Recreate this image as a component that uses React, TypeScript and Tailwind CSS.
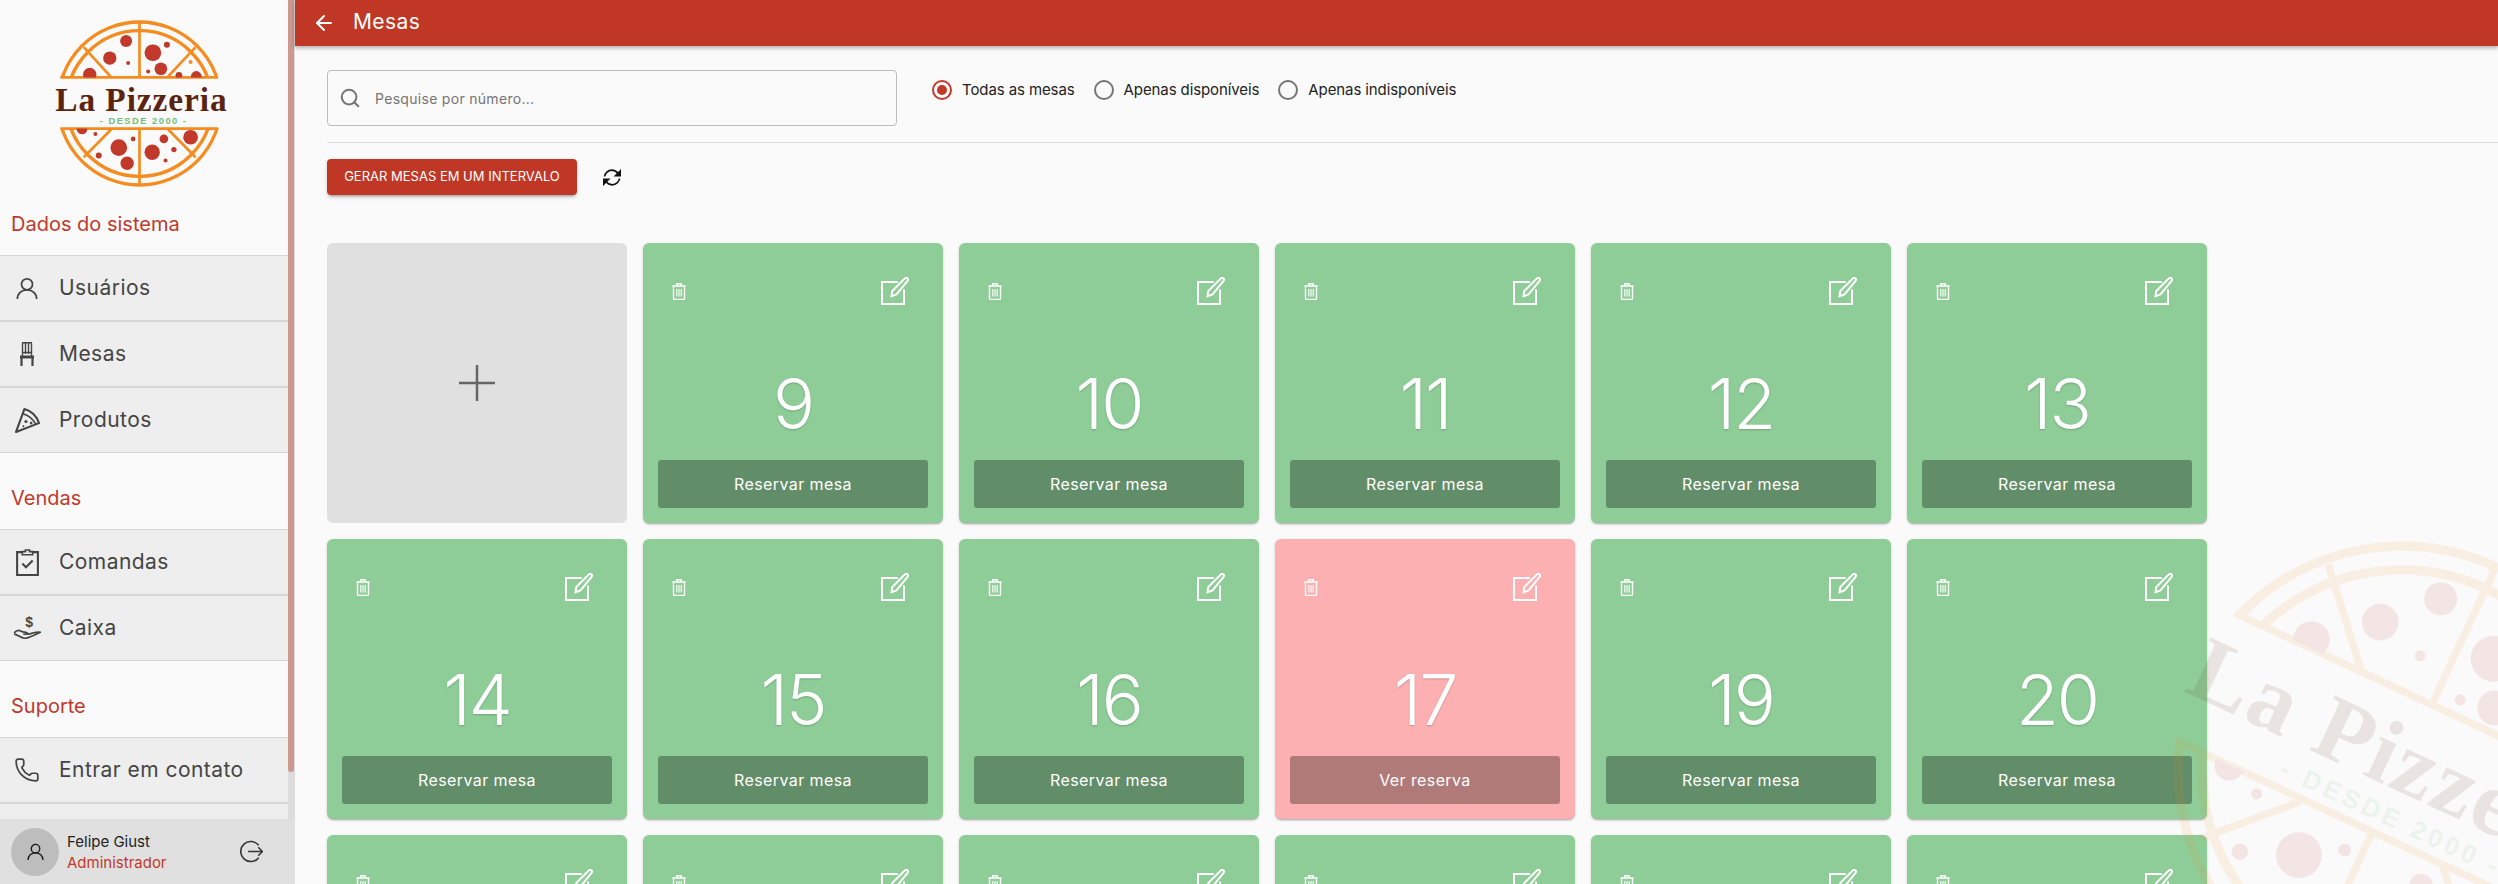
import { ArrowLeft, Phone, Search } from 'lucide-react';

const font = { fontFamily: 'Inter, "Noto Sans", sans-serif' };

function Logo({ className }: { className: string }) {
  const top = [
    [377, 122, 18], [328, 173, 20], [383, 188, 6], [457, 157, 25], [499, 133, 9], [481, 205, 19],
    [443, 213, 6], [268, 222, 20], [535, 225, 10], [587, 228, 16],
  ];
  const bottom = [
    [245, 385, 16], [285, 400, 6], [355, 441, 25], [398, 415, 7], [295, 465, 9], [380, 488, 20],
    [455, 455, 23], [490, 415, 13], [520, 447, 8], [495, 480, 6], [570, 410, 22],
  ];
  return (
    <svg viewBox="137 29 560 560" className={className}>
      <defs>
        <clipPath id="pizza-top"><rect x="137" y="29" width="560" height="202" /></clipPath>
        <clipPath id="pizza-bottom"><rect x="137" y="384" width="560" height="205" /></clipPath>
      </defs>
      {['pizza-top', 'pizza-bottom'].map((clip) => (
        <g key={clip} clipPath={`url(#${clip})`} fill="none" stroke="#f68b1f" strokeWidth="10">
          <circle cx="417" cy="309" r="244" />
          <circle cx="417" cy="309" r="218" />
        </g>
      ))}
      <g stroke="#f68b1f" strokeWidth="8">
        <path d="M180 231H652M180 384H652" />
        <path d="M417 64V231M250 140L330 228M585 140L503 228" />
        <path d="M417 384V554M250 470L332 387M585 470L503 387" />
      </g>
      <g clipPath="url(#pizza-top)" fill="#c0392b">
        {top.map(([cx, cy, r]) => <circle key={`${cx}-${cy}`} cx={cx} cy={cy} r={r} />)}
        <circle cx="570" cy="185" r="6" fill="#f68b1f" />
      </g>
      <g clipPath="url(#pizza-bottom)" fill="#c0392b">
        {bottom.map(([cx, cy, r]) => <circle key={`${cx}-${cy}`} cx={cx} cy={cy} r={r} />)}
      </g>
      <text x="165" y="332" textLength="513" fontSize="100" fontWeight="700" fill="#5a2410" style={{ fontFamily: '"Liberation Serif", serif' }}>La Pizzeria</text>
      <text x="298" y="371" textLength="258" fontSize="28" fontWeight="700" fill="#74bd77" style={{ fontFamily: '"Liberation Sans", sans-serif' }}>- DESDE 2000 -</text>
    </svg>
  );
}

function UserIcon({ className }: { className: string }) {
  return (
    <svg viewBox="0 0 24 24" fill="none" stroke="currentColor" strokeWidth="1.9" className={className}>
      <circle cx="12" cy="8" r="6" />
      <path d="M1.5 24c0-6 4.500-10 10.500-10s10.500 4 10.500 10" />
    </svg>
  );
}

function ChairIcon({ className }: { className: string }) {
  return (
    <svg viewBox="0 0 14 24" fill="none" stroke="currentColor" className={className}>
      <path d="M2 .8h10M2.500 1v13M11.500 1v13M5.500 1v11M8.500 1v11M2.500 10.500h9" strokeWidth="1.400" />
      <path d="M0 15h14" strokeWidth="3" />
      <path d="M1.500 16v8M12.500 16v8" strokeWidth="2.200" />
    </svg>
  );
}

function PizzaIcon({ className }: { className: string }) {
  return (
    <svg viewBox="0 0 24 24" fill="none" stroke="currentColor" strokeWidth="2" strokeLinejoin="round" className={className}>
      <path d="M1 23 9 1C15.500 2.500 21 8 23 14.500Z" />
      <path d="M7.500 5.500C13 7 17.500 11 20 15.500" strokeWidth="1.500" />
      <circle cx="10.500" cy="13" r="1.500" fill="currentColor" stroke="none" />
      <circle cx="15.500" cy="14.500" r="1.300" fill="currentColor" stroke="none" />
      <circle cx="8" cy="17.500" r="1" fill="currentColor" stroke="none" />
    </svg>
  );
}

function ClipboardIcon({ className }: { className: string }) {
  return (
    <svg viewBox="0 0 24 26" fill="none" stroke="currentColor" strokeWidth="2" className={className}>
      <path d="M7 3H2v22h20V3h-5" />
      <path d="M7 5.500V2.500h3V1h4v1.500h3v3Z" strokeWidth="1.600" />
      <path d="m7 14 3.500 3.500L17 11" />
    </svg>
  );
}

function CashIcon({ className }: { className: string }) {
  return (
    <svg viewBox="0 0 26 24" fill="none" stroke="currentColor" strokeWidth="1.600" className={className}>
      <path d="M1 16.500c2-2 4-3 6-1.800s4 1.300 5.500 1.500c1.300.2 1.300 1.600-.2 1.600H9.500" />
      <path d="M1 17.500c3 .8 6 3.500 9.500 4 3.500.4 9-3 15-5.500-3-.5-8 1-12 1.800" />
      <text x="15" y="11.500" textAnchor="middle" fontSize="13" fontWeight="700" fill="currentColor" stroke="none" style={{ fontFamily: '"Liberation Sans", sans-serif' }}>$</text>
    </svg>
  );
}

function LogoutIcon({ className }: { className: string }) {
  return (
    <svg viewBox="0 0 24 24" fill="none" stroke="currentColor" strokeWidth="1.600" className={className}>
      <path d="M19.500 5.500A10.500 10.500 0 1 0 19.500 18.500" />
      <path d="M8.500 12h15M19 7.500l4.500 4.500-4.500 4.500" />
    </svg>
  );
}

function SyncIcon({ className }: { className: string }) {
  return (
    <svg viewBox="0 0 18 19" className={className}>
      <g fill="none" stroke="currentColor" strokeWidth="1.700">
        <path d="M1.500 8.500C2 5 5 2.200 8.800 2.200c2.600 0 4.700 1.200 6 3.200" />
        <path d="M16.500 10.500c-.5 3.500-3.500 6.300-7.300 6.300-2.600 0-4.700-1.200-6-3.200" />
      </g>
      <path d="M18 1v7.500h-7.500ZM0 18v-7.500h7.500Z" fill="currentColor" />
    </svg>
  );
}

function TrashIcon({ className }: { className: string }) {
  return (
    <svg viewBox="0 0 14 17" fill="none" stroke="currentColor" strokeWidth="1.400" className={className}>
      <path d="M.4 3h13.200M4.800 3V.8h4.400V3" />
      <path d="M1.500 3v12.300c0 .7.500 1.200 1.200 1.200h8.600c.7 0 1.200-.5 1.200-1.200V3" />
      <path d="M4.800 6v7.500M7 6v7.500M9.200 6v7.500" strokeWidth="1.100" />
    </svg>
  );
}

function EditIcon({ className }: { className: string }) {
  return (
    <svg viewBox="0 0 28 28" fill="none" stroke="currentColor" strokeWidth="2" className={className}>
      <path d="M17 5H1v22h22V12.500" />
      <path d="M24 1.300c1-.8 2.200-.5 2.700.3s.4 1.700-.3 2.500L15.500 17.500l-5 1.800.8-5.300Z" />
    </svg>
  );
}

function MenuItem({ icon, label }: { icon?: React.ReactNode; label?: string }) {
  return (
    <div className="flex h-[66px] items-center border-y border-[#d6d6d6] bg-[#eeeeee] text-[#444444]">
      <div className="flex w-[59px] shrink-0 justify-center pr-[5px]">{icon}</div>
      <span className="text-[21px] tracking-[0.45px]">{label}</span>
    </div>
  );
}

function SectionTitle({ label }: { label: string }) {
  return <div className="flex h-[76px] items-end pb-[18px] pl-[11px] text-[20px] leading-[26px] text-[#c0392b]">{label}</div>;
}

function Sidebar() {
  return (
    <aside className="relative flex h-full w-[295px] shrink-0 overflow-hidden bg-[#fafafa]">
      <div className="w-[288px] shrink-0">
        <div className="h-[179px] pt-[10px]">
          <Logo className="ml-[46px] block h-[187px] w-[187px]" />
        </div>
        <SectionTitle label="Dados do sistema" />
        <MenuItem icon={<UserIcon className="h-[22px] w-[22px]" />} label="Usuários" />
        <MenuItem icon={<ChairIcon className="h-[24px] w-[14px]" />} label="Mesas" />
        <MenuItem icon={<PizzaIcon className="h-[25px] w-[25px]" />} label="Produtos" />
        <SectionTitle label="Vendas" />
        <MenuItem icon={<ClipboardIcon className="h-[27px] w-[25px]" />} label="Comandas" />
        <MenuItem icon={<CashIcon className="h-[26px] w-[28px]" />} label="Caixa" />
        <SectionTitle label="Suporte" />
        <MenuItem icon={<Phone className="h-[26px] w-[26px]" strokeWidth={1.6} />} label="Entrar em contato" />
        <MenuItem />
      </div>
      <div className="w-[7px] bg-[#dcdcdc]">
        <div className="h-[772px] w-[6px] rounded-b-[3px] bg-[#cc9890]" />
      </div>
      <div className="absolute right-0 bottom-0 left-0 flex h-[65px] items-center bg-[#e0e0e0]">
        <div className="ml-[11px] flex h-[48px] w-[48px] items-center justify-center rounded-full bg-[#bdbdbd] text-[#1c1c1c]">
          <UserIcon className="h-[17px] w-[17px]" />
        </div>
        <div className="ml-[8px] flex-1 text-[15px] leading-[21px]">
          <div className="text-[#222222]">Felipe Giust</div>
          <div className="text-[#c0392b]">Administrador</div>
        </div>
        <LogoutIcon className="mr-[32px] h-[23px] w-[23px] text-[#333333]" />
      </div>
    </aside>
  );
}

function Radio({ label, checked }: { label: string; checked?: boolean }) {
  return (
    <label className="flex items-center gap-[10px]">
      <span className={`flex h-[20px] w-[20px] items-center justify-center rounded-full border-2 ${checked ? 'border-[#c0392b]' : 'border-[#757575]'}`}>
        {checked && <span className="h-[10px] w-[10px] rounded-full bg-[#c0392b]" />}
      </span>
      <span className="text-[15px] tracking-[-0.1px] text-[#222222]">{label}</span>
    </label>
  );
}

function AddCard() {
  return (
    <div className="flex h-[280px] w-[300px] items-center justify-center rounded-[6px] bg-[#e0e0e0]">
      <svg viewBox="0 0 36 36" className="h-[36px] w-[36px] text-[#666666]" fill="none" stroke="currentColor" strokeWidth="2.500">
        <path d="M18 0v36M0 18h36" />
      </svg>
    </div>
  );
}

function TableCard({ number, busy }: { number?: number; busy?: boolean }) {
  return (
    <div className={`flex h-[280px] w-[300px] flex-col rounded-[6px] p-[15px] text-white shadow-[0_2px_2px_-1px_rgba(0,0,0,0.25),0_1px_3px_0_rgba(0,0,0,0.14)] ${busy ? 'bg-[#fdb0b1]' : 'bg-[#8ecd97]'}`}>
      <div className="mt-[18px] flex h-[30px] items-center justify-between pr-[19px] pl-[14px]">
        <TrashIcon className="h-[17px] w-[14px]" />
        <EditIcon className="h-[28px] w-[28px]" />
      </div>
      {number !== undefined && (
        <>
          <div className="flex flex-1 items-center justify-center pt-[41px] text-[70px] font-light tracking-[-2px] [text-shadow:0_1px_2px_rgba(0,0,0,0.2)]">{number}</div>
          <div className={`flex h-[48px] items-center justify-center rounded-[3px] text-[16px] tracking-[0.4px] ${busy ? 'bg-[#af7a78]' : 'bg-[#628d69]'}`}>
            {busy ? 'Ver reserva' : 'Reservar mesa'}
          </div>
        </>
      )}
    </div>
  );
}

export default function App() {
  const tables = [9, 10, 11, 12, 13, 14, 15, 16, 17, 19, 20];
  // the third row is cut by the window above its numbers
  const cutRow = [0, 1, 2, 3, 4, 5];
  return (
    <div className="relative flex h-screen w-full overflow-hidden bg-[#fafafa]" style={font}>
      <Sidebar />
      <main className="flex min-w-0 flex-1 flex-col">
        <header className="z-10 flex h-[46px] shrink-0 items-center bg-[#c03825] pl-[17px] text-white shadow-[0_2px_4px_rgba(0,0,0,0.3)]">
          <ArrowLeft className="h-[24px] w-[24px]" strokeWidth={2} />
          <h1 className="ml-[17px] pb-[2px] text-[21px] tracking-[0.4px]">Mesas</h1>
        </header>
        <div className="pl-[32px]">
          <div className="flex h-[97px] items-start border-b border-[#dddddd] pt-[24px]">
            <div className="flex h-[56px] w-[570px] items-center rounded-[4px] border border-[#bbbbbb] pl-[11px] text-[#757575]">
              <Search className="h-[22px] w-[22px]" strokeWidth={2.2} />
              <span className="ml-[14px] text-[14px] tracking-[0.3px]">Pesquise por número...</span>
            </div>
            <div className="ml-[35px] flex items-center pt-[9px]">
              <Radio label="Todas as mesas" checked />
              <div className="ml-[19px]"><Radio label="Apenas disponíveis" /></div>
              <div className="ml-[19px]"><Radio label="Apenas indisponíveis" /></div>
            </div>
          </div>
          <div className="mt-[16px] flex items-center">
            <button className="h-[36px] w-[250px] rounded-[4px] bg-[#c03825] text-[13px] text-white uppercase shadow-[0_3px_3px_-2px_rgba(0,0,0,0.3),0_2px_4px_rgba(0,0,0,0.15)]">
              Gerar mesas em um intervalo
            </button>
            <SyncIcon className="ml-[26px] h-[19px] w-[18px] text-[#111111]" />
          </div>
          <div className="mt-[48px] flex flex-wrap gap-[16px]">
            <AddCard />
            {tables.map((n) => <TableCard key={n} number={n} busy={n === 17} />)}
            {cutRow.map((n) => <TableCard key={n} />)}
          </div>
        </div>
      </main>
      <Logo className="pointer-events-none absolute top-[513px] left-[2145px] h-[513px] w-[513px] rotate-[25deg] opacity-[0.1]" />
    </div>
  );
}
